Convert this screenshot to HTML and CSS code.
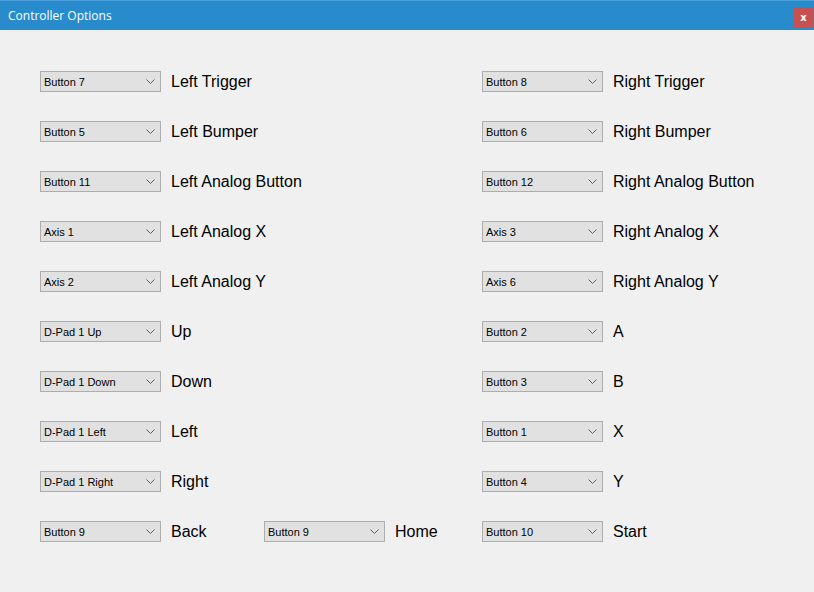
FILE: index.html
```html
<!DOCTYPE html>
<html>
<head>
<meta charset="utf-8">
<title>Controller Options</title>
<link rel="stylesheet" href="styles.css">
</head>
<body>
<div class="window">
  <div class="titlebar">
    <span class="title">Controller Options</span>
    <span class="close">x</span>
  </div>
  <div class="content">
    <div class="grid">
      <div class="cell"><div class="combo"><span>Button 7</span><svg class="chev" viewBox="0 0 9 5"><path d="M0.5 0.5 L4.5 4.5 L8.5 0.5" /></svg></div><span class="label">Left Trigger</span></div>
      <div class="cell"></div>
      <div class="cell"><div class="combo"><span>Button 8</span><svg class="chev" viewBox="0 0 9 5"><path d="M0.5 0.5 L4.5 4.5 L8.5 0.5" /></svg></div><span class="label">Right Trigger</span></div>

      <div class="cell"><div class="combo"><span>Button 5</span><svg class="chev" viewBox="0 0 9 5"><path d="M0.5 0.5 L4.5 4.5 L8.5 0.5" /></svg></div><span class="label">Left Bumper</span></div>
      <div class="cell"></div>
      <div class="cell"><div class="combo"><span>Button 6</span><svg class="chev" viewBox="0 0 9 5"><path d="M0.5 0.5 L4.5 4.5 L8.5 0.5" /></svg></div><span class="label">Right Bumper</span></div>

      <div class="cell"><div class="combo"><span>Button 11</span><svg class="chev" viewBox="0 0 9 5"><path d="M0.5 0.5 L4.5 4.5 L8.5 0.5" /></svg></div><span class="label">Left Analog Button</span></div>
      <div class="cell"></div>
      <div class="cell"><div class="combo"><span>Button 12</span><svg class="chev" viewBox="0 0 9 5"><path d="M0.5 0.5 L4.5 4.5 L8.5 0.5" /></svg></div><span class="label">Right Analog Button</span></div>

      <div class="cell"><div class="combo"><span>Axis 1</span><svg class="chev" viewBox="0 0 9 5"><path d="M0.5 0.5 L4.5 4.5 L8.5 0.5" /></svg></div><span class="label">Left Analog X</span></div>
      <div class="cell"></div>
      <div class="cell"><div class="combo"><span>Axis 3</span><svg class="chev" viewBox="0 0 9 5"><path d="M0.5 0.5 L4.5 4.5 L8.5 0.5" /></svg></div><span class="label">Right Analog X</span></div>

      <div class="cell"><div class="combo"><span>Axis 2</span><svg class="chev" viewBox="0 0 9 5"><path d="M0.5 0.5 L4.5 4.5 L8.5 0.5" /></svg></div><span class="label">Left Analog Y</span></div>
      <div class="cell"></div>
      <div class="cell"><div class="combo"><span>Axis 6</span><svg class="chev" viewBox="0 0 9 5"><path d="M0.5 0.5 L4.5 4.5 L8.5 0.5" /></svg></div><span class="label">Right Analog Y</span></div>

      <div class="cell"><div class="combo"><span>D-Pad 1 Up</span><svg class="chev" viewBox="0 0 9 5"><path d="M0.5 0.5 L4.5 4.5 L8.5 0.5" /></svg></div><span class="label">Up</span></div>
      <div class="cell"></div>
      <div class="cell"><div class="combo"><span>Button 2</span><svg class="chev" viewBox="0 0 9 5"><path d="M0.5 0.5 L4.5 4.5 L8.5 0.5" /></svg></div><span class="label">A</span></div>

      <div class="cell"><div class="combo"><span>D-Pad 1 Down</span><svg class="chev" viewBox="0 0 9 5"><path d="M0.5 0.5 L4.5 4.5 L8.5 0.5" /></svg></div><span class="label">Down</span></div>
      <div class="cell"></div>
      <div class="cell"><div class="combo"><span>Button 3</span><svg class="chev" viewBox="0 0 9 5"><path d="M0.5 0.5 L4.5 4.5 L8.5 0.5" /></svg></div><span class="label">B</span></div>

      <div class="cell"><div class="combo"><span>D-Pad 1 Left</span><svg class="chev" viewBox="0 0 9 5"><path d="M0.5 0.5 L4.5 4.5 L8.5 0.5" /></svg></div><span class="label">Left</span></div>
      <div class="cell"></div>
      <div class="cell"><div class="combo"><span>Button 1</span><svg class="chev" viewBox="0 0 9 5"><path d="M0.5 0.5 L4.5 4.5 L8.5 0.5" /></svg></div><span class="label">X</span></div>

      <div class="cell"><div class="combo"><span>D-Pad 1 Right</span><svg class="chev" viewBox="0 0 9 5"><path d="M0.5 0.5 L4.5 4.5 L8.5 0.5" /></svg></div><span class="label">Right</span></div>
      <div class="cell"></div>
      <div class="cell"><div class="combo"><span>Button 4</span><svg class="chev" viewBox="0 0 9 5"><path d="M0.5 0.5 L4.5 4.5 L8.5 0.5" /></svg></div><span class="label">Y</span></div>

      <div class="cell"><div class="combo"><span>Button 9</span><svg class="chev" viewBox="0 0 9 5"><path d="M0.5 0.5 L4.5 4.5 L8.5 0.5" /></svg></div><span class="label">Back</span></div>
      <div class="cell"><div class="combo"><span>Button 9</span><svg class="chev" viewBox="0 0 9 5"><path d="M0.5 0.5 L4.5 4.5 L8.5 0.5" /></svg></div><span class="label">Home</span></div>
      <div class="cell"><div class="combo"><span>Button 10</span><svg class="chev" viewBox="0 0 9 5"><path d="M0.5 0.5 L4.5 4.5 L8.5 0.5" /></svg></div><span class="label">Start</span></div>
    </div>
  </div>
</div>
</body>
</html>
```
FILE: styles.css
```css
html, body {
  margin: 0;
  padding: 0;
  background: #f0f0f0;
}
.window {
  width: 814px;
  height: 592px;
  background: #f0f0f0;
  overflow: hidden;
}
.titlebar {
  height: 30px;
  box-sizing: border-box;
  background: #288bcc;
  border-top: 1px solid #4aa0dc;
  display: flex;
  align-items: center;
  justify-content: space-between;
  padding-left: 8px;
  padding-right: 1px;
}
.title {
  color: #ffffff;
  font-family: "Open Sans", "Noto Sans", sans-serif;
  font-size: 12px;
  margin-top: -1px;
}
.close {
  width: 19px;
  height: 19px;
  background: #c75050;
  color: #ffffff;
  font-family: "DejaVu Sans", sans-serif;
  font-weight: bold;
  font-size: 10px;
  display: flex;
  align-items: center;
  justify-content: center;
  margin-top: 4px;
}
.content {
  padding: 41px 0 0 40px;
}
.grid {
  display: grid;
  grid-template-columns: 224px 218px auto;
  row-gap: 29px;
}
.cell {
  display: flex;
  align-items: center;
  gap: 10px;
  height: 21px;
  min-width: 0;
}
.combo {
  flex: none;
  width: 121px;
  height: 21px;
  box-sizing: border-box;
  border: 1px solid #adadad;
  background: #e1e1e1;
  display: flex;
  align-items: center;
  justify-content: space-between;
  padding: 0 4px 0 3px;
  font-family: "Liberation Sans", Arial, sans-serif;
  font-size: 11px;
  color: #000000;
}
.chev {
  width: 9px;
  height: 5px;
  margin-right: 1px;
  fill: none;
  stroke: #606060;
  stroke-width: 1;
}
.label {
  flex: none;
  font-family: "Liberation Sans", Arial, sans-serif;
  font-size: 16px;
  color: #000000;
  white-space: nowrap;
}
```
